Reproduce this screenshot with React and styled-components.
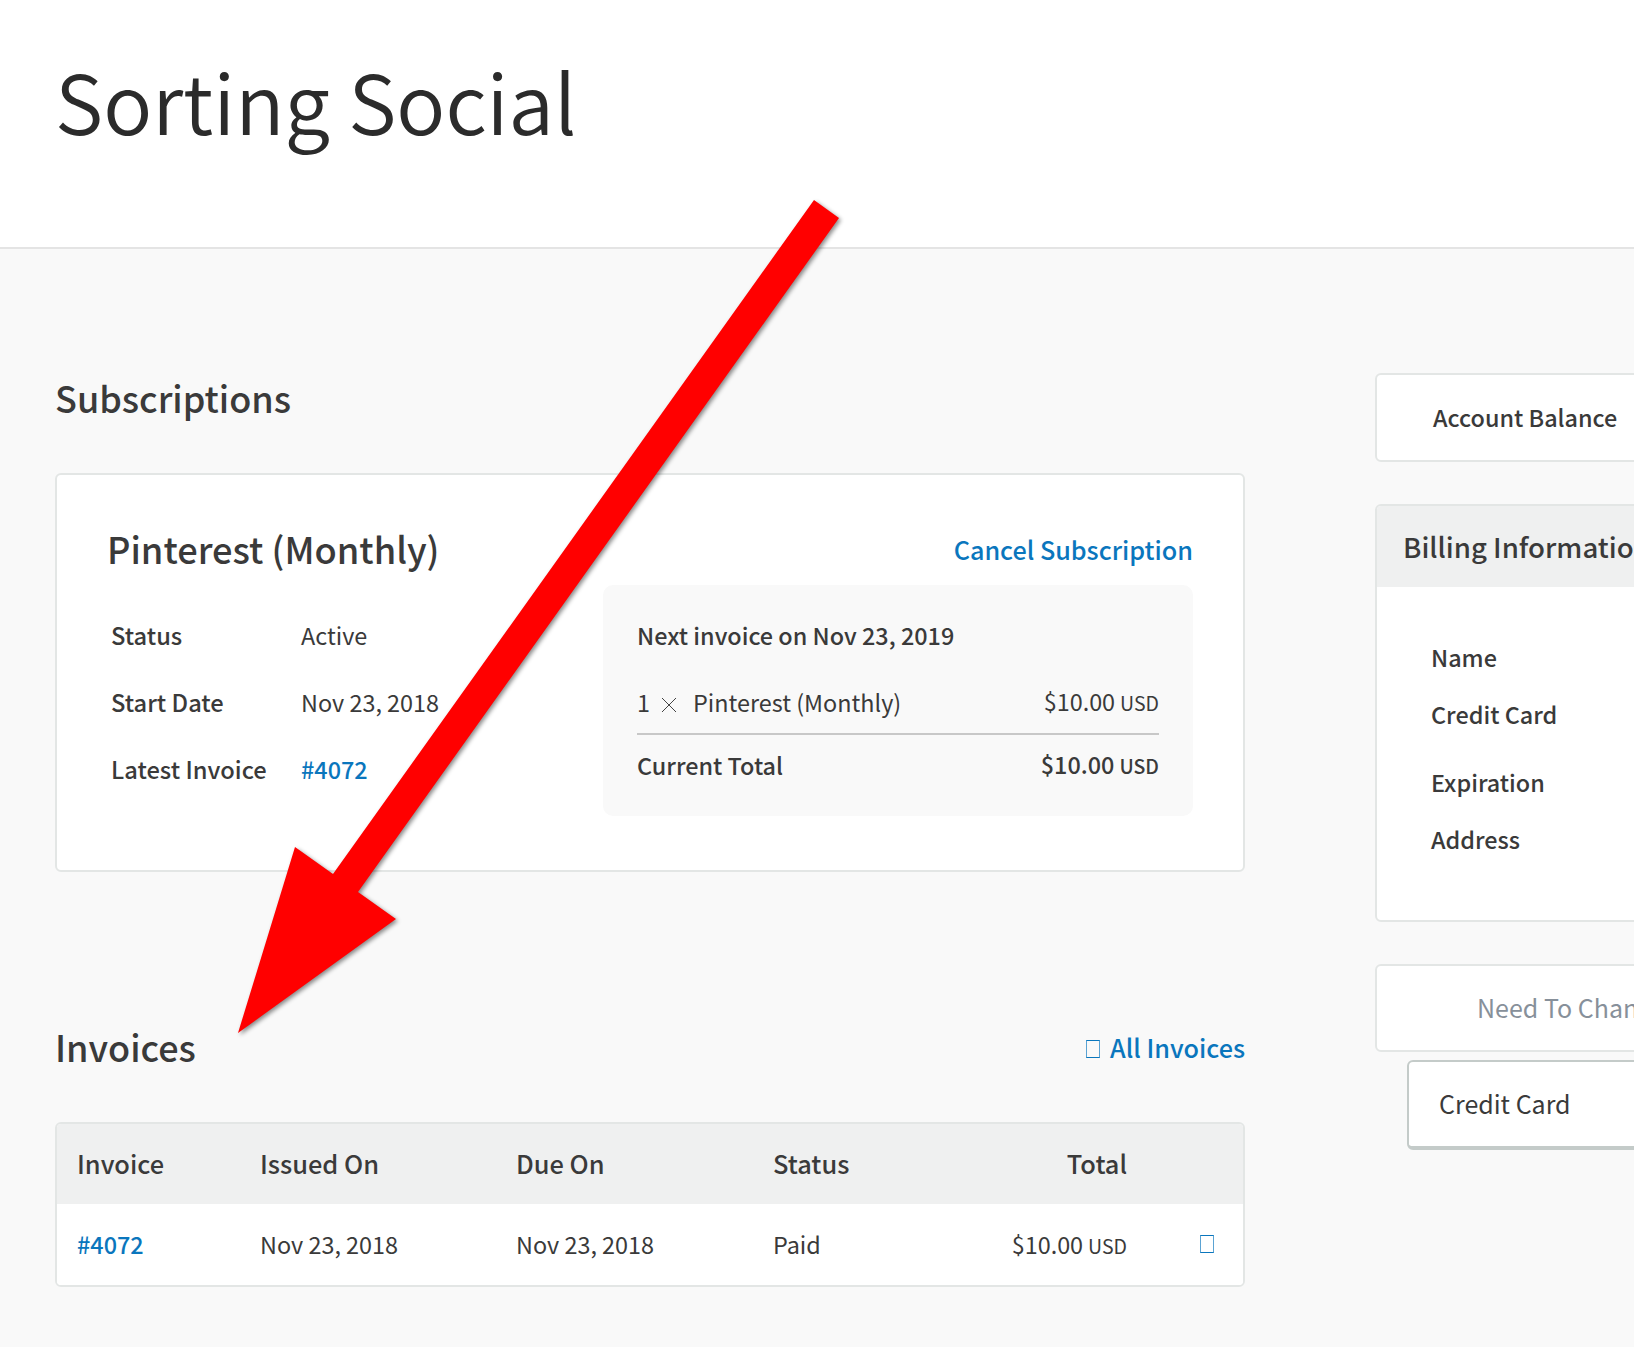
import React from 'react';
import styled, { createGlobalStyle } from 'styled-components';

const FONT = '"Noto Sans CJK SC", "Noto Sans CJK JP", "Noto Sans", sans-serif';
const BLUE = '#0a76bd';
const TEXT = '#3a3a3a';
const LINE = '#e3e6e5';
const BG = '#f9f9f9';

const Global = createGlobalStyle`
  html, body { margin: 0; padding: 0; background: ${BG}; }
  body { font-family: ${FONT}; color: ${TEXT}; }
  * { box-sizing: border-box; }
`;

const Page = styled.div`
  position: relative;
  width: 1634px;
  height: 1347px;
  overflow: hidden;
  background: ${BG};
`;

const Header = styled.header`
  height: 249px;
  padding: 51px 0 0 55px;
  background: #fff;
  border-bottom: 2px solid #e4e4e4;
`;

const Title = styled.h1`
  margin: 0;
  font-size: 81.5px;
  font-weight: 350;
  line-height: 96px;
  color: #2b2b2b;
`;

const Body = styled.div`
  display: flex;
  align-items: flex-start;
  padding-left: 55px;
`;

const Main = styled.main`
  flex: none;
  width: 1190px;
  padding-top: 126px;
`;

const Side = styled.aside`
  flex: none;
  width: 420px;
  margin-left: 130px;
  padding-top: 124px;
`;

const SectionHead = styled.div`
  display: flex;
  justify-content: space-between;
  align-items: center;
  height: 44px;
`;

const SectionTitle = styled.h2`
  margin: 0;
  font-size: 36px;
  font-weight: 500;
  line-height: 44px;
`;

const Card = styled.div`
  background: #fff;
  border: 2px solid ${LINE};
  border-radius: 6px;
  overflow: hidden;
`;

const SubCard = styled(Card)`
  height: 399px;
  margin-top: 54px;
  padding: 48px 50px 0 50px;
`;

const SubHead = styled.div`
  display: flex;
  justify-content: space-between;
  align-items: center;
  height: 50px;
`;

const PlanName = styled.h3`
  margin: 0;
  font-size: 36.2px;
  font-weight: 500;
  line-height: 50px;
`;

const TextLink = styled.a`
  color: ${BLUE};
  font-size: 25.2px;
  font-weight: 500;
  line-height: 34px;
  padding-top: 2px;
  text-decoration: none;
  display: inline-flex;
  align-items: center;
  gap: 10px;
`;

const SubBody = styled.div`
  display: flex;
  justify-content: space-between;
`;

const Facts = styled.dl`
  margin: 28px 0 0 4px;
  display: grid;
  grid-template-columns: 190px auto;
  grid-auto-rows: 67px;
  align-items: center;
`;

const FactLabel = styled.dt`
  font-size: 23.7px;
  font-weight: 500;
  line-height: 34px;
`;

const FactValue = styled.dd`
  margin: 0;
  font-size: 23.4px;
  font-weight: 400;
  line-height: 34px;
`;

const InlineLink = styled.a`
  color: ${BLUE};
  font-weight: 500;
  text-decoration: none;
`;

const NextBox = styled.div`
  width: 590px;
  height: 231px;
  margin-top: 12px;
  padding: 25px 34px 0;
  background: ${BG};
  border-radius: 10px;
`;

const NextTitle = styled.div`
  font-size: 23.4px;
  font-weight: 500;
  line-height: 50px;
`;

const LineRow = styled.div`
  display: flex;
  justify-content: space-between;
  align-items: center;
  font-size: 23.4px;
  font-weight: ${p => (p.strong ? 500 : 400)};
  line-height: 34px;
  margin-top: ${p => (p.strong ? '12px' : '24px')};
  padding-bottom: ${p => (p.strong ? 0 : '13px')};
  border-bottom: ${p => (p.strong ? 'none' : '2px solid #c8c8c8')};
`;

const Quantity = styled.span`
  display: inline-flex;
  align-items: center;
`;

const Times = styled.svg`
  width: 16px;
  height: 16px;
  margin: 6px 16px 0 11px;
`;

const Unit = styled.span`
  font-size: 19.5px;
  margin-left: 5px;
`;

const InvoiceHead = styled(SectionHead)`
  margin-top: 152px;
`;

const Tofu = styled.span`
  display: inline-block;
  width: 14px;
  height: 18px;
  margin-top: 3px;
  border: 1px solid ${BLUE};
  border-left-color: #5ba3d3;
  border-right-color: #5ba3d3;
`;

const Table = styled(Card)`
  margin-top: 54px;
`;

const TableRow = styled.div`
  display: grid;
  grid-template-columns: 183px 256px 257px 224px 130px 1fr;
  align-items: center;
  height: ${p => (p.head ? '80px' : '81px')};
  padding: 0 0 2px 20px;
  background: ${p => (p.head ? '#eff0f0' : '#fff')};
  font-size: ${p => (p.head ? '25.4px' : '23.4px')};
  font-weight: ${p => (p.head ? 500 : 400)};
`;

const Right = styled.div`
  text-align: right;
  white-space: nowrap;
`;

const RowIcon = styled.div`
  padding: 0 0 2px 73px;
  display: flex;
`;

const SideCard = styled(Card)`
  height: ${p => p.h}px;
  display: flex;
  align-items: center;
  padding: 0 0 2px ${p => p.pad}px;
  font-size: ${p => (p.muted ? '25px' : '23.4px')};
  font-weight: ${p => (p.muted ? 400 : 500)};
  white-space: nowrap;
  margin-bottom: ${p => p.mb || 0}px;
  color: ${p => (p.muted ? '#87909a' : TEXT)};
`;

const BillingCard = styled(Card)`
  height: 418px;
  margin-bottom: 42px;
`;

const BillingHead = styled.div`
  height: 81px;
  padding: 20px 0 0 26px;
  background: #eff0f0;
  font-size: 27.6px;
  font-weight: 500;
  line-height: 40px;
  white-space: nowrap;
`;

const BillingRows = styled.div`
  padding: 53px 0 0 54px;
  display: flex;
  flex-direction: column;
  font-size: 23.4px;
  font-weight: 500;
  line-height: 34px;
`;

const BillingRow = styled.div`
  margin-bottom: ${p => p.gap}px;
`;

const CardButton = styled.button`
  display: block;
  width: 400px;
  height: 90px;
  margin: 8px 0 0 32px;
  padding: 0 0 2px 30px;
  font: 400 25px/34px ${FONT};
  color: ${TEXT};
  text-align: left;
  background: #fff;
  border: 2px solid #c4cbc9;
  border-bottom-width: 4px;
  border-radius: 6px;
`;

const Arrow = styled.svg`
  position: absolute;
  left: 0;
  top: 0;
  pointer-events: none;
  filter: drop-shadow(2px 2px 2px rgba(0, 0, 0, 0.45));
`;

export default function App() {
  return (
    <Page>
      <Global />
      <Header>
        <Title>Sorting Social</Title>
      </Header>
      <Body>
        <Main>
          <SectionHead>
            <SectionTitle>Subscriptions</SectionTitle>
          </SectionHead>
          <SubCard>
            <SubHead>
              <PlanName>Pinterest (Monthly)</PlanName>
              <TextLink href="#">Cancel Subscription</TextLink>
            </SubHead>
            <SubBody>
              <Facts>
                <FactLabel>Status</FactLabel>
                <FactValue>Active</FactValue>
                <FactLabel>Start Date</FactLabel>
                <FactValue>Nov 23, 2018</FactValue>
                <FactLabel>Latest Invoice</FactLabel>
                <FactValue><InlineLink href="#">#4072</InlineLink></FactValue>
              </Facts>
              <NextBox>
                <NextTitle>Next invoice on Nov 23, 2019</NextTitle>
                <LineRow>
                  <Quantity>
                    1
                    <Times viewBox="0 0 16 16">
                      <path d="M1 1l14 14M15 1L1 15" stroke="#444" strokeWidth="1" fill="none" />
                    </Times>
                    Pinterest (Monthly)
                  </Quantity>
                  <span>$10.00<Unit>USD</Unit></span>
                </LineRow>
                <LineRow strong>
                  <span>Current Total</span>
                  <span>$10.00<Unit>USD</Unit></span>
                </LineRow>
              </NextBox>
            </SubBody>
          </SubCard>

          <InvoiceHead>
            <SectionTitle>Invoices</SectionTitle>
            <TextLink href="#"><Tofu />All Invoices</TextLink>
          </InvoiceHead>
          <Table>
            <TableRow head>
              <div>Invoice</div>
              <div>Issued On</div>
              <div>Due On</div>
              <div>Status</div>
              <Right>Total</Right>
              <div />
            </TableRow>
            <TableRow>
              <div><InlineLink href="#">#4072</InlineLink></div>
              <div>Nov 23, 2018</div>
              <div>Nov 23, 2018</div>
              <div>Paid</div>
              <Right>$10.00<Unit>USD</Unit></Right>
              <RowIcon><Tofu /></RowIcon>
            </TableRow>
          </Table>
        </Main>

        <Side>
          <SideCard h={89} pad={56} mb={42}>Account Balance</SideCard>
          <BillingCard>
            <BillingHead>Billing Information</BillingHead>
            <BillingRows>
              <BillingRow gap={23}>Name</BillingRow>
              <BillingRow gap={34}>Credit Card</BillingRow>
              <BillingRow gap={23}>Expiration</BillingRow>
              <BillingRow gap={0}>Address</BillingRow>
            </BillingRows>
          </BillingCard>
          <SideCard h={88} pad={100} muted>Need To Change</SideCard>
          <CardButton>Credit Card</CardButton>
        </Side>
      </Body>

      <Arrow width="1634" height="1347" viewBox="0 0 1634 1347">
        <polygon
          points="814,200 839,218 358,892 396,919 238,1033 295,847 333,874"
          fill="#ff0000"
        />
      </Arrow>
    </Page>
  );
}
